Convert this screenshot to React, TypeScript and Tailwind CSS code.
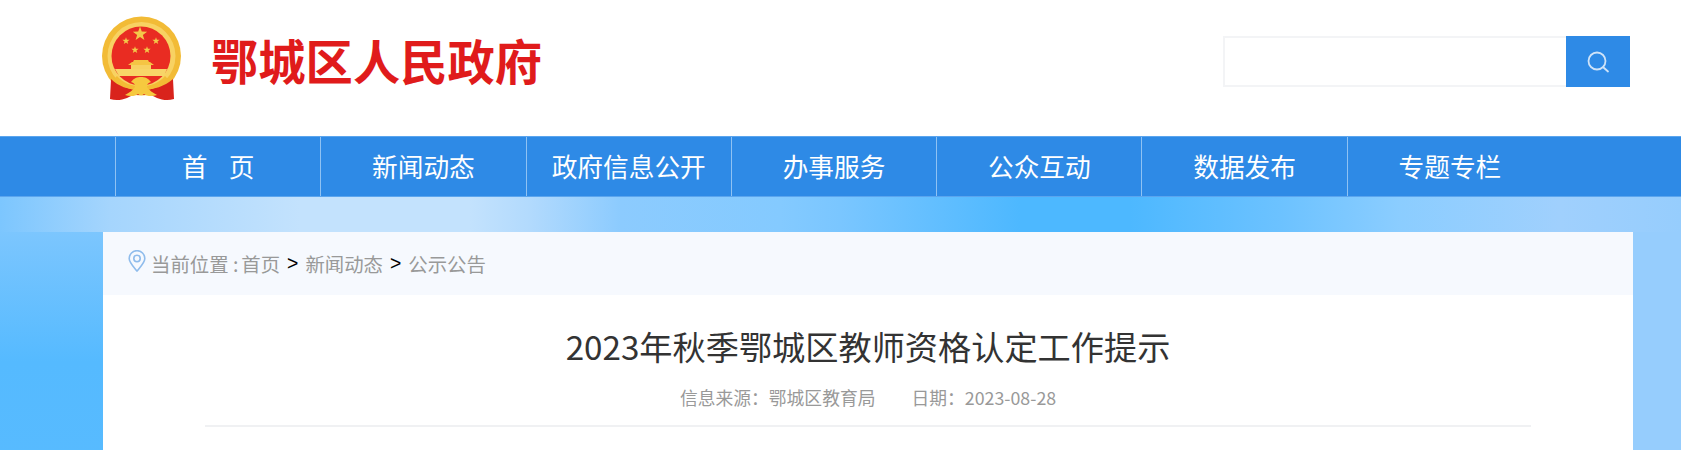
const cjk = "font-['Noto_Sans_CJK_SC','Noto_Sans',sans-serif]";

const navItems = ['首\u2002\u2004页', '新闻动态', '政府信息公开', '办事服务', '公众互动', '数据发布', '专题专栏'];

const Star = ({ x, y, r }: { x: number; y: number; r: number }) => {
    const points = [];
    for (let i = 0; i < 10; i++) {
        const radius = i % 2 === 0 ? r : r * 0.4;
        const angle = (Math.PI / 5) * i - Math.PI / 2;
        points.push(`${x + radius * Math.cos(angle)},${y + radius * Math.sin(angle)}`);
    }
    return <polygon points={points.join(' ')} fill="#f3c94a" />;
};

const Emblem = () => (
    <svg width="80" height="85" viewBox="0 0 80 85" className="shrink-0">
        <circle cx="39.500" cy="40" r="39.500" fill="#f2bb36" />
        <circle cx="39.500" cy="40" r="34" fill="#f8d262" />
        <circle cx="39" cy="40" r="29.500" fill="#e92c22" />
        <Star x={38} y={18} r={7.500} />
        <Star x={24} y={25} r={3.800} />
        <Star x={54} y={25} r={3.800} />
        <Star x={33} y={34} r={3.800} />
        <Star x={45} y={34} r={3.800} />
        <path d="M26 49l4-3h1l1-2h14l1 2h1l4 3z" fill="#f5c544" />
        <rect x="29" y="49" width="20" height="4" fill="#f7d262" />
        <path d="M13 53h52l-3 7H17z" fill="#f8d568" />
        <path d="M9 63c7 7 17 11 30 11s24-4 32-11l1 20c-6 2-12 1-17-1l-6-3H31l-6 3c-5 2-11 3-17 1z" fill="#d9231c" />
        <path d="M15 60c6 7 14 10 24 10s18-3 24-10l3 3c-7 8-16 11-27 11s-20-3-27-11z" fill="#f3bc35" />
        <path d="M29 66c3-4 6-5 10-5s7 1 10 5c-3 1-4 2-4 5 2 3 6 6 10 8-5 2-11 1-13-1-1 1-2 1-3 1s-2 0-3-1c-2 2-8 3-13 1 4-2 8-5 10-8 0-3-1-4-4-5z" fill="#f6c93f" />
    </svg>
);

const Pin = () => (
    <svg width="18" height="22" viewBox="0 0 18 22" fill="none" stroke="#8fbcec" strokeWidth="1.600" className="shrink-0">
        <path d="M9 21C5 16 1.200 12.500 1.200 8.500a7.800 7.800 0 0 1 15.600 0C16.800 12.500 13 16 9 21z" />
        <circle cx="9" cy="8.500" r="3.200" />
    </svg>
);

const SearchGlyph = () => (
    <svg width="24" height="24" viewBox="0 0 24 24" fill="none" stroke="#cfe3f8" strokeWidth="1.800" strokeLinecap="round">
        <circle cx="11" cy="11" r="8.500" />
        <path d="M17.500 17.500L22 21.500" />
    </svg>
);

export default function App() {
    return (
        <div className={`flex flex-col h-[450px] overflow-hidden bg-white ${cjk}`}>
            <header className="flex justify-between items-start h-[136px] pl-[102px] pr-[51px]">
                <div className="flex items-start pt-4">
                    <Emblem />
                    <h1 className="ml-[29px] mt-[14px] text-[47.300px] leading-[60px] font-bold text-[#e01b1b]">鄂城区人民政府</h1>
                </div>
                <div className="flex mt-9 h-[51px] w-[407px] border-2 border-[#f3f4f6]">
                    <div className="flex-1" />
                    <div className="flex items-center justify-center w-16 -m-[2px] bg-[#2e8ae6]">
                        <SearchGlyph />
                    </div>
                </div>
            </header>

            <nav className="flex h-[61px] pl-[115px] bg-[#2e8ae6] border-y border-[#5ba5ee]">
                {navItems.map((item) => (
                    <div
                        key={item}
                        className="flex items-center justify-center w-[205.300px] border-l border-[#8fc2f3] text-[25.700px] text-white"
                    >
                        {item}
                    </div>
                ))}
            </nav>

            <main className="flex-1 flex flex-col pl-[103px] pr-[48px] pt-[35px] [background:linear-gradient(90deg,#7cc6fe_0px,#a5d5fd_110px,#c3e2fd_300px,#c3e2fd_470px,#b2dafd_530px,#8ccbfe_620px,#84caff_780px,#7ac6ff_840px,#4db8ff_1020px,#4db8ff_1130px,#6cc2ff_1280px,#8bcdff_1400px,#a0d0fd_1560px,#96cdfd_1681px)_0_0/100%_35px_no-repeat,linear-gradient(180deg,#7cc6fe_0px,#55baff_130px,#58bbff_100%)_0_35px/103px_100%_no-repeat,#96cdfd]">
                <div className="flex-1 flex flex-col bg-white">
                    <div className="flex items-center h-[63px] pl-[25px] bg-[#f6f9fe] text-[19.400px] text-[#999999]">
                        <span className="-mt-[6px]">
                            <Pin />
                        </span>
                        <span className="ml-[5px] mr-[3px]">当前位置 :</span>
                        <span>首页</span>
                        <span className="mx-[7px] font-['Liberation_Sans',sans-serif] text-black">&gt;</span>
                        <span>新闻动态</span>
                        <span className="mx-[7px] font-['Liberation_Sans',sans-serif] text-black">&gt;</span>
                        <span>公示公告</span>
                    </div>
                    <div className="mx-[102px] h-[132px] border-b-2 border-[#f0f1f3]">
                        <h2 className="pt-[26px] text-center text-[33.200px] leading-[50px] text-[#333333]">
                            2023年秋季鄂城区教师资格认定工作提示
                        </h2>
                        <div className="flex justify-center gap-[36px] mt-[13px] text-[17.800px] leading-[26px] text-[#999999]">
                            <span>信息来源：鄂城区教育局</span>
                            <span>日期：2023-08-28</span>
                        </div>
                    </div>
                </div>
            </main>
        </div>
    );
}
